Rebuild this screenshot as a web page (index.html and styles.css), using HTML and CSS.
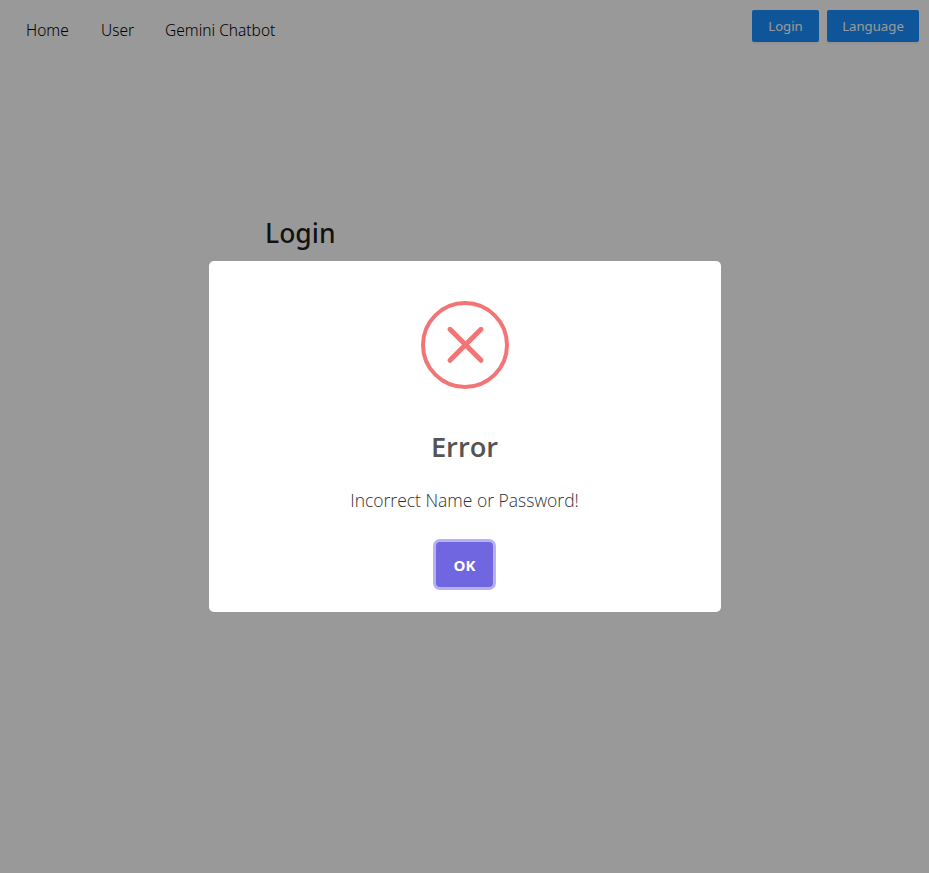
FILE: index.html
```html
<!DOCTYPE html>
<html lang="en">
<head>
<meta charset="utf-8">
<title>Login</title>
<link rel="stylesheet" href="styles.css">
</head>
<body>
<header class="navbar">
  <nav class="menu">
    <a class="menu-item home">Home</a>
    <a class="menu-item user">User</a>
    <a class="menu-item chatbot">Gemini Chatbot</a>
  </nav>
  <div class="actions">
    <button class="btn login">Login</button>
    <button class="btn language">Language</button>
  </div>
</header>
<main class="content">
  <h2 class="heading">Login</h2>
</main>
<div class="overlay">
  <section class="modal" role="dialog">
    <svg class="error-icon" viewBox="0 0 88 88" width="88" height="88">
      <circle cx="44" cy="44" r="42"/>
      <path d="M29 28.3 60 59.3M60 28.3 29 59.3"/>
    </svg>
    <h2 class="modal-title">Error</h2>
    <p class="modal-text">Incorrect Name or Password!</p>
    <button class="confirm">OK</button>
  </section>
</div>
</body>
</html>
```
FILE: styles.css
```css
* { box-sizing: border-box; }
body {
  margin: 0;
  height: 100vh;
  overflow: hidden;
  background: #fff;
  color: rgba(0, 0, 0, 0.88);
  font-family: "Noto Sans", "Open Sans", sans-serif;
}
.navbar {
  display: flex;
  justify-content: space-between;
  height: 60px;
  padding: 10px 10px 0 26px;
}
.menu { display: flex; padding-top: 8px; }
.menu-item {
  color: #000;
  font-size: 15.5px;
  font-weight: 300;
  line-height: 25px;
  white-space: nowrap;
}
.home { width: 75px; }
.user { width: 64px; }
.actions { display: flex; gap: 8px; }
.btn {
  height: 32px;
  padding: 0;
  border: 0;
  border-radius: 2px;
  background: #1890ff;
  box-shadow: 0 2px 0 rgba(0, 0, 0, 0.045);
  color: #fff;
  font: 400 13.2px/32px "Noto Sans", sans-serif;
}
.login { width: 67px; }
.language { width: 92px; }
.content { padding: 153px 265px 0; }
.heading {
  margin: 0;
  font-size: 26.5px;
  font-weight: 500;
  line-height: 40px;
}
.overlay {
  position: fixed;
  inset: 0;
  display: grid;
  place-items: center;
  background: rgba(0, 0, 0, 0.4);
}
.modal {
  display: flex;
  flex-direction: column;
  align-items: center;
  width: 512px;
  height: 351px;
  border-radius: 5px;
  background: #fff;
  color: #545454;
  font-family: "Open Sans", sans-serif;
}
.error-icon {
  margin-top: 40px;
  fill: none;
  stroke: #f27474;
  stroke-width: 4;
  stroke-linecap: round;
}
.error-icon path { stroke-width: 5; }
.modal-title {
  margin: 37px 0 0;
  font-size: 27.3px;
  font-weight: 600;
  line-height: 41px;
}
.modal-text {
  margin: 19px 0 0;
  color: #303030;
  font-size: 17.5px;
  font-weight: 300;
  line-height: 28px;
}
.confirm {
  width: 57px;
  height: 45px;
  margin-top: 28px;
  padding: 0;
  border: 0;
  border-radius: 4px;
  background: #7066e0;
  box-shadow: 0 0 0 3px #b7b2ef;
  color: #fff;
  font: 700 15px/46px "Open Sans", sans-serif;
}
```
